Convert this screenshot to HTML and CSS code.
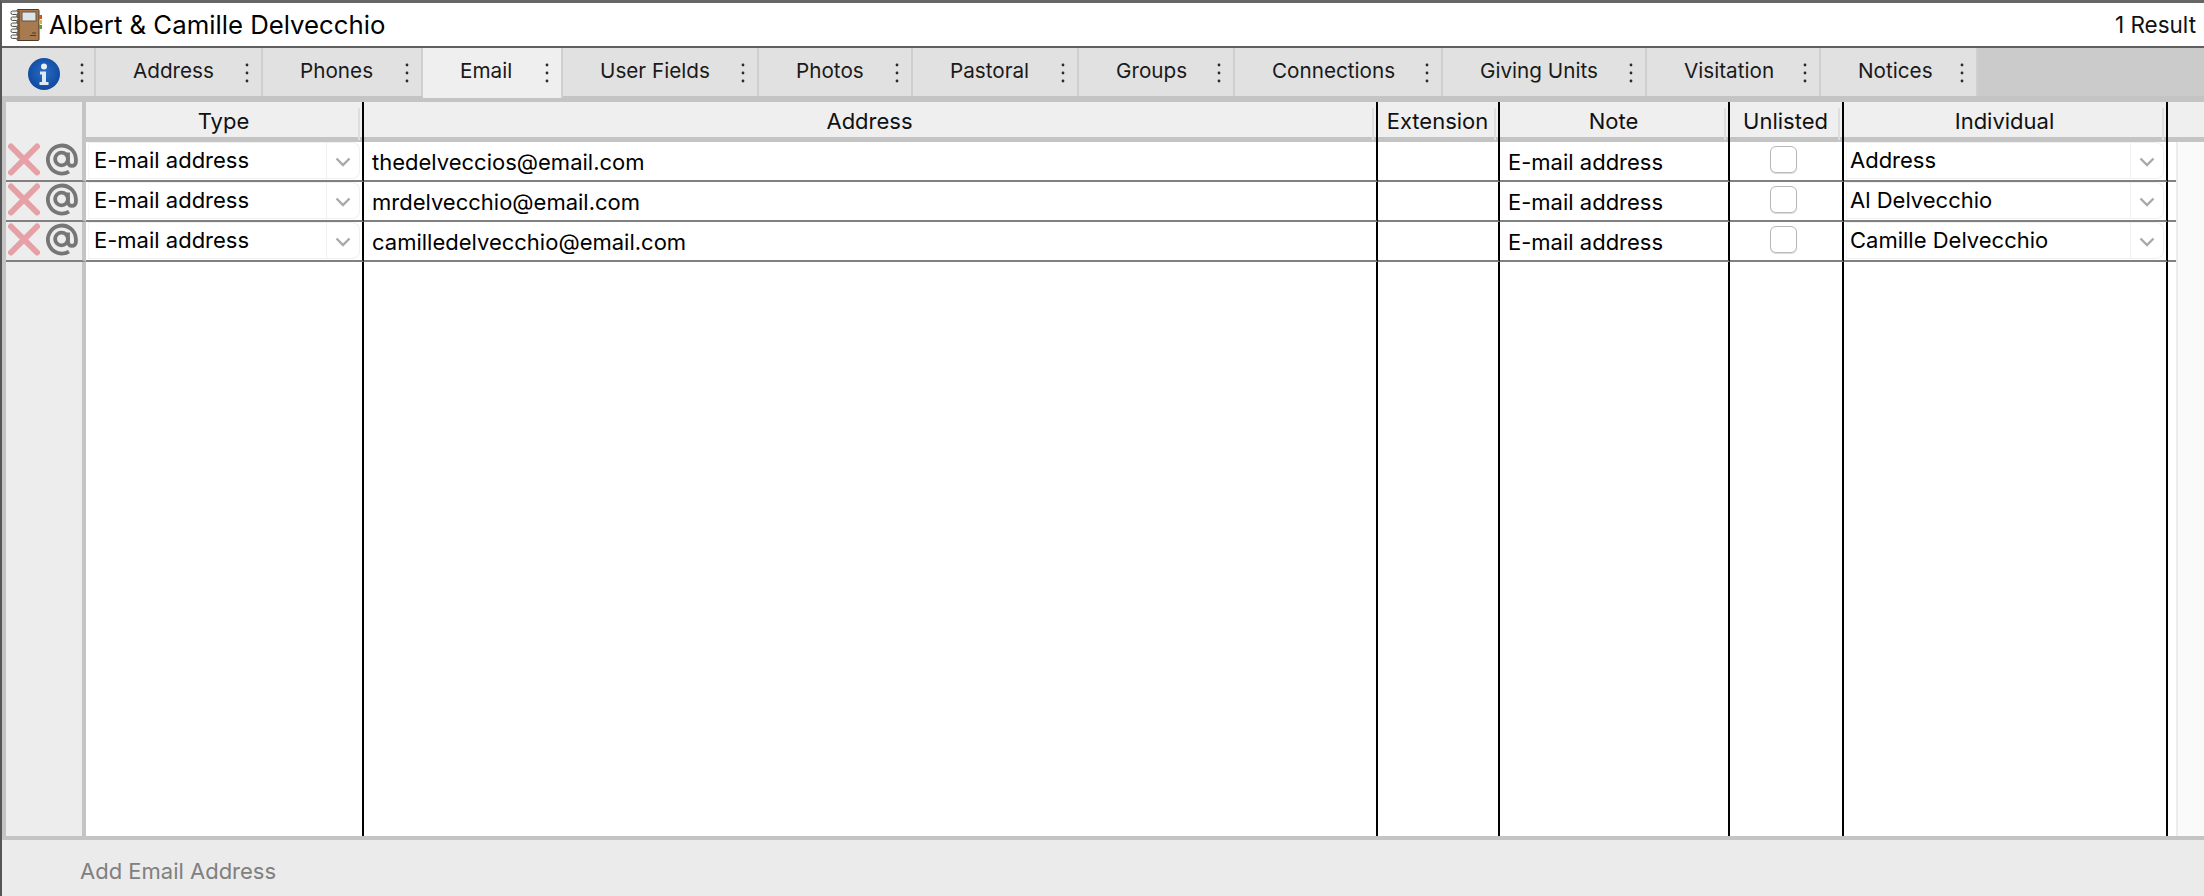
FILE: index.html
```html
<!DOCTYPE html>
<html lang="en">
<head>
<meta charset="utf-8">
<title>Albert &amp; Camille Delvecchio</title>
<link rel="stylesheet" href="styles.css">
</head>
<body>
<svg class="defs" width="0" height="0" aria-hidden="true">
  <symbol id="dots" viewBox="0 0 4 20"><circle cx="2" cy="2" r="1.4"/><circle cx="2" cy="10" r="1.4"/><circle cx="2" cy="18" r="1.4"/></symbol>
  <symbol id="del" viewBox="0 0 32 33"><path d="M3 3.5 29 29.5M29 3.5 3 29.5" fill="none" stroke="#e5a1a6" stroke-width="6" stroke-linecap="round"/></symbol>
  <symbol id="at" viewBox="0 0 32 33"><g fill="none" stroke="#767676" stroke-width="3.8"><circle cx="15.5" cy="16" r="6.4"/><path d="M22 9.5V19a3.9 3.9 0 0 0 7.900 0v-3A14 14 0 1 0 23 28.600"/></g></symbol>
  <symbol id="chev" viewBox="0 0 16 10"><path d="M1.5 1.5 8 8l6.500-6.500" fill="none" stroke="#a9a9a9" stroke-width="2.400"/></symbol>
</svg>
<div class="app">
  <header class="titlebar">
    <svg class="book" width="32" height="32" viewBox="0 0 32 32" aria-hidden="true">
      <rect x="7" y="0.500" width="22" height="31" rx="1" fill="#a87a50" stroke="#4e3a28"/>
      <rect x="8" y="1.500" width="2" height="29" fill="#7c5836"/>
      <rect x="12" y="3" width="14" height="9" fill="#dfe3e6" stroke="#5d5348"/>
      <g fill="#eef0f0" stroke="#55504a"><rect x="1" y="2" width="7" height="3.500" rx="1.500"/><rect x="1" y="8" width="7" height="3.500" rx="1.500"/><rect x="1" y="14" width="7" height="3.500" rx="1.500"/><rect x="1" y="20" width="7" height="3.500" rx="1.500"/><rect x="1" y="26" width="7" height="3.500" rx="1.500"/></g>
      <rect x="29" y="6" width="3" height="4" fill="#c8592f"/><rect x="29" y="11" width="3" height="4" fill="#d8b23a"/><rect x="29" y="16" width="3" height="4" fill="#5c9a3e"/>
      <path d="M20 26.500h6M22 24h4" stroke="#4e3a28" stroke-width="1"/>
    </svg>
    <h1 class="name">Albert &amp; Camille Delvecchio</h1>
    <span class="count">1 Result</span>
  </header>
  <nav class="tabs">
    <div class="tab tab-info">
      <svg class="info" width="32" height="32" viewBox="0 0 32 32" aria-hidden="true">
        <defs><radialGradient id="blue" cx="50%" cy="45%" r="60%"><stop offset="0" stop-color="#2b6cc4"/><stop offset="1" stop-color="#0d469c"/></radialGradient></defs>
        <circle cx="16" cy="16" r="16" fill="url(#blue)"/>
        <circle cx="16" cy="8.500" r="3" fill="#e6eef8"/>
        <path d="M12 13.500h6V24h2.500v3h-9v-3H14v-7.500h-2z" fill="#dfe9f6"/>
      </svg>
      <svg class="dots"><use href="#dots"/></svg>
    </div>
    <div class="tab"><span>Address</span><svg class="dots"><use href="#dots"/></svg></div>
    <div class="tab"><span>Phones</span><svg class="dots"><use href="#dots"/></svg></div>
    <div class="tab tab-active"><span>Email</span><svg class="dots"><use href="#dots"/></svg></div>
    <div class="tab"><span>User Fields</span><svg class="dots"><use href="#dots"/></svg></div>
    <div class="tab"><span>Photos</span><svg class="dots"><use href="#dots"/></svg></div>
    <div class="tab"><span>Pastoral</span><svg class="dots"><use href="#dots"/></svg></div>
    <div class="tab"><span>Groups</span><svg class="dots"><use href="#dots"/></svg></div>
    <div class="tab"><span>Connections</span><svg class="dots"><use href="#dots"/></svg></div>
    <div class="tab"><span>Giving Units</span><svg class="dots"><use href="#dots"/></svg></div>
    <div class="tab"><span>Visitation</span><svg class="dots"><use href="#dots"/></svg></div>
    <div class="tab"><span>Notices</span><svg class="dots"><use href="#dots"/></svg></div>
  </nav>
  <main class="table">
    <div class="cols head">
      <div class="hcell hcell-actions"></div>
      <div class="hcell"><div class="hlabel">Type</div></div>
      <div class="hcell"><div class="hlabel">Address</div></div>
      <div class="hcell"><div class="hlabel">Extension</div></div>
      <div class="hcell"><div class="hlabel">Note</div></div>
      <div class="hcell"><div class="hlabel">Unlisted</div></div>
      <div class="hcell"><div class="hlabel">Individual</div></div>
      <div class="hcell-end"></div>
    </div>

    <div class="cols row">
      <div class="cell actions"><svg class="ico"><use href="#del"/></svg><svg class="ico"><use href="#at"/></svg></div>
      <div class="cell"><div class="select"><span class="select-text">E-mail address</span><span class="select-btn"><svg class="chev"><use href="#chev"/></svg></span></div></div>
      <div class="cell text">thedelveccios@email.com</div>
      <div class="cell"></div>
      <div class="cell text">E-mail address</div>
      <div class="cell center"><span class="check"></span></div>
      <div class="cell"><div class="select select-person"><span class="select-text">Address</span><span class="select-btn"><svg class="chev"><use href="#chev"/></svg></span></div></div>
      <div class="cell cell-tail"></div>
      <div class="cell-end"></div>
    </div>

    <div class="cols row">
      <div class="cell actions"><svg class="ico"><use href="#del"/></svg><svg class="ico"><use href="#at"/></svg></div>
      <div class="cell"><div class="select"><span class="select-text">E-mail address</span><span class="select-btn"><svg class="chev"><use href="#chev"/></svg></span></div></div>
      <div class="cell text">mrdelvecchio@email.com</div>
      <div class="cell"></div>
      <div class="cell text">E-mail address</div>
      <div class="cell center"><span class="check"></span></div>
      <div class="cell"><div class="select select-person"><span class="select-text">Al Delvecchio</span><span class="select-btn"><svg class="chev"><use href="#chev"/></svg></span></div></div>
      <div class="cell cell-tail"></div>
      <div class="cell-end"></div>
    </div>

    <div class="cols row">
      <div class="cell actions"><svg class="ico"><use href="#del"/></svg><svg class="ico"><use href="#at"/></svg></div>
      <div class="cell"><div class="select"><span class="select-text">E-mail address</span><span class="select-btn"><svg class="chev"><use href="#chev"/></svg></span></div></div>
      <div class="cell text">camilledelvecchio@email.com</div>
      <div class="cell"></div>
      <div class="cell text">E-mail address</div>
      <div class="cell center"><span class="check"></span></div>
      <div class="cell"><div class="select select-person"><span class="select-text">Camille Delvecchio</span><span class="select-btn"><svg class="chev"><use href="#chev"/></svg></span></div></div>
      <div class="cell cell-tail"></div>
      <div class="cell-end"></div>
    </div>

    <div class="cols filler">
      <div class="fill actions"></div>
      <div class="fill"></div>
      <div class="fill"></div>
      <div class="fill"></div>
      <div class="fill"></div>
      <div class="fill"></div>
      <div class="fill"></div>
      <div class="fill fill-tail"></div>
      <div class="cell-end"></div>
    </div>
  </main>
  <footer class="footer">Add Email Address</footer>
</div>
</body>
</html>
```
FILE: styles.css
```css
* { box-sizing: border-box; }
html, body { margin: 0; height: 100%; }
body {
  width: 2204px;
  height: 896px;
  overflow: hidden;
  background: #ebebeb;
  color: #111;
  font-family: Inter, "Noto Sans", "Liberation Sans", sans-serif;
  font-size: 22px;
}
.defs { display: block; height: 0; }
.app {
  height: 896px;
  display: flex;
  flex-direction: column;
  border-top: 3px solid #666;
  border-left: 2px solid #555;
}

/* title bar */
.titlebar {
  height: 45px;
  flex: none;
  display: flex;
  align-items: center;
  padding: 0 8px 0 8px;
  background: #fff;
  border-bottom: 2px solid #5f5f5f;
}
.book { flex: none; margin-right: 7px; }
.name { margin: 0; font-size: 25.750px; font-weight: 400; color: #000; }
.count { margin-left: auto; font-size: 22.500px; color: #111; }

/* tabs */
.tabs {
  flex: none;
  height: 54px;
  display: grid;
  grid-template-columns: 94px 167px 160px 140px 196px 154px 166px 156px 208px 204px 174px 157px 1fr;
  background: #cbcbcb;
  border-bottom: 6px solid #c4c4c4;
}
.tab {
  display: flex;
  align-items: center;
  padding: 0 12px 0 37px;
  background: #e1e1e1;
  border-right: 2px solid #cfcfcf;
  font-size: 20.700px;
  color: #1a1a1a;
}
.tab span { margin-top: -4px; }
.tab-info { padding: 0 10px 0 26px; }
.tab-active {
  background: #efefef;
  margin-bottom: -2px;
  padding-bottom: 2px;
}
.dots {
  width: 4px;
  height: 20px;
  margin-left: auto;
  fill: #2a2a2a;
  margin-top: 2px;
}
.info { margin-top: 4px; }

/* table */
.table {
  flex: 1;
  min-height: 0;
  display: flex;
  flex-direction: column;
  padding-left: 4px;
  background: #c4c4c4;
}
.cols {
  display: grid;
  grid-template-columns: 80px 278px 1014px 122px 230px 114px 324px 8px 28px;
}
.head {
  height: 40px;
  flex: none;
  grid-template-columns: 80px 278px 1014px 122px 230px 114px 324px 36px;
  border-bottom: 5px solid #c4c4c4;
  background: #efefef;
}
.hcell {
  display: flex;
  padding: 6px 2px 3px 0;
  border-right: 2px solid #000;
}
.hcell-actions {
  padding: 0;
  background: #ededed;
  border-right: 4px solid #c4c4c4;
}
.hlabel {
  flex: 1;
  display: flex;
  align-items: center;
  justify-content: center;
  border-right: 2px solid #dedede;
  font-size: 22px;
  color: #111;
  padding: 0 0 6px 3px;
}
.row { height: 40px; flex: none; background: #fff; }
.cell {
  min-width: 0;
  background: #fff;
  border-right: 2px solid #000;
  border-bottom: 2px solid #808080;
}
.actions {
  display: flex;
  align-items: flex-start;
  padding: 1px 0 0 2px;
  gap: 6px;
  background: #ededed;
  border-right: 4px solid #c4c4c4;
}
.ico { width: 32px; height: 33px; flex: none; }
.text {
  display: flex;
  align-items: center;
  padding: 2px 0 0 8px;
  font-size: 22px;
  color: #000;
}
.center { display: flex; justify-content: center; padding: 4px 5px 0 0; }
.check {
  width: 27px;
  height: 27px;
  border: 1px solid #b8b8b8;
  border-radius: 6px;
  background: #fff;
  box-shadow: 0 1px 1px rgba(0,0,0,.14);
}
.select {
  height: 37px;
  margin: 0 2px;
  display: flex;
  align-items: center;
  background: #fff;
  border: 1px solid #f0f0f0;
  border-left-color: #f6f6f6;
  border-radius: 0 8px 8px 0;
}
.select-text { flex: 1; padding: 0 0 1px 5px; font-size: 22px; color: #000; }
.select-person .select-text { padding-left: 3px; }
.select-btn {
  width: 33px;
  height: 100%;
  display: flex;
  align-items: center;
  justify-content: center;
  border-left: 1px solid #f0f0f0;
}
.chev { width: 16px; height: 10px; margin-top: 3px; }
.cell-tail { border-right: 0; }
.cell-end {
  background: #fafafa;
  border-left: 2px solid #ececec;
}
.filler { flex: 1; min-height: 0; background: #fff; }
.fill { background: #fff; border-right: 2px solid #000; }
.fill.actions { background: #ededed; border-right: 4px solid #c4c4c4; }
.fill-tail { border-right: 0; }

/* footer */
.footer {
  flex: none;
  height: 60px;
  display: flex;
  align-items: center;
  padding: 6px 0 0 78px;
  background: #ebebeb;
  border-top: 4px solid #c4c4c4;
  font-size: 22px;
  color: #808080;
}
```
